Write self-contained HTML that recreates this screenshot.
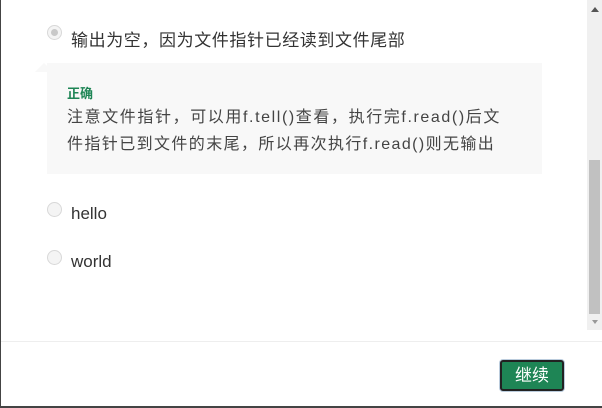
<!DOCTYPE html>
<html><head><meta charset="utf-8"><style>
body{margin:0;width:602px;height:408px;background:#fff;position:relative;overflow:hidden;font-family:"Liberation Sans","Noto Sans CJK SC",sans-serif;color:#333}
.lb{position:absolute;left:0;top:0;width:1px;height:408px;background:#444}
.bb{position:absolute;left:0;top:406px;width:602px;height:2px;background:#444}
.radio{position:absolute;left:47px;width:13px;height:13px;border-radius:50%;border:1px solid #d8d8d8;background:#f4f4f4}
.radio.on::after{content:"";position:absolute;left:3px;top:3px;width:7px;height:7px;border-radius:50%;background:#c8c8c8}
.t{position:absolute;left:71px;font-size:17px;color:#333;white-space:nowrap}
.box{position:absolute;left:47px;top:63px;width:495px;height:111px;background:#f8f8f8}
.arrow{position:absolute;left:35px;top:54px;width:0;height:0;border:9px solid transparent;border-bottom-color:#f8f8f8}
.ok{position:absolute;left:67px;top:83px;font-size:13px;font-weight:bold;color:#1e8555}
.exp{position:absolute;left:67px;top:104px;font-size:16px;line-height:27px;color:#444;white-space:nowrap}
.sb{position:absolute;left:587px;top:0;width:15px;height:330px;background:#f0f0f0}
.th{position:absolute;left:589px;top:160px;width:11px;height:154px;background:#c1c1c1}
.hr{position:absolute;left:1px;top:341px;width:601px;height:1px;background:#eee}
.btn{position:absolute;left:500px;top:360px;width:60px;height:27px;background:#1e8555;border:2px solid #222;border-radius:3px;color:#fff;font-size:17px;text-align:center;line-height:27px;box-shadow:0 0 0 1px #bcd}
</style></head><body>
<div class="lb"></div>
<div class="radio on" style="top:25px"></div>
<div class="t" style="top:26px;letter-spacing:0.6px">输出为空，因为文件指针已经读到文件尾部</div>
<div class="arrow"></div>
<div class="box"></div>
<div class="ok">正确</div>
<div class="exp"><span style="letter-spacing:1.6px">注意文件指针，可以用f.tell()查看，执行完f.read()后文</span><br><span style="letter-spacing:1.4px">件指针已到文件的末尾，所以再次执行f.read()则无输出</span></div>
<div class="radio" style="top:202px"></div>
<div class="t" style="top:204px">hello</div>
<div class="radio" style="top:250px"></div>
<div class="t" style="top:252px">world</div>
<div class="sb"></div>
<div class="th"></div>
<div style="position:absolute;left:591px;top:7px;border:4px solid transparent;border-bottom:5px solid #555;border-top:0"></div>
<div style="position:absolute;left:592px;top:320px;border:3px solid transparent;border-top:4px solid #999;border-bottom:0"></div>
<div class="hr"></div>
<div class="btn">继续</div>
<div class="bb"></div>
</body></html>
